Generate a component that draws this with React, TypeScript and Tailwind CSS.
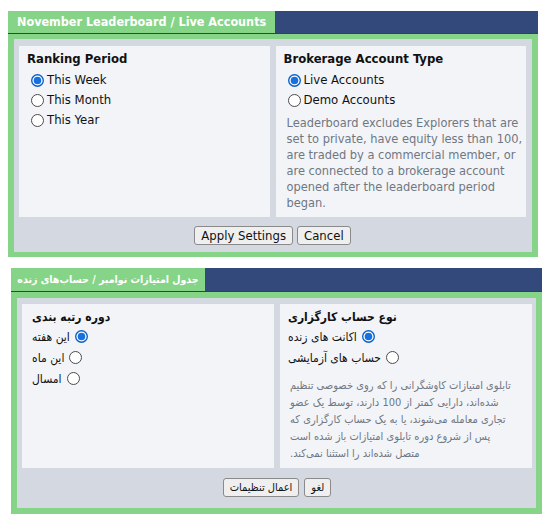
import React from 'react';

const Radio: React.FC<{ checked?: boolean; className?: string }> = ({ checked, className }) =>
  checked ? (
    <svg width="13" height="13" viewBox="0 0 13 13" className={`shrink-0 ${className ?? ''}`}>
      <circle cx="6.5" cy="6.5" r="6.5" fill="#0a5fc6" />
      <circle cx="6.5" cy="6.5" r="5.1" fill="#ffffff" />
      <circle cx="6.5" cy="6.5" r="3.8" fill="#1670df" />
    </svg>
  ) : (
    <svg width="13" height="13" viewBox="0 0 13 13" className={`shrink-0 ${className ?? ''}`}>
      <circle cx="6.5" cy="6.5" r="6" fill="#ffffff" stroke="#4b4b4b" strokeWidth="1" />
    </svg>
  );

const Button: React.FC<{ children: React.ReactNode; className?: string }> = ({ children, className }) => (
  <button
    className={`h-[19px] bg-[#efefef] border border-[#8a8a8a] rounded-[3px] text-[#111] leading-none flex items-center justify-center ${className ?? ''}`}
  >
    {children}
  </button>
);

const EnRow: React.FC<{ label: string; checked?: boolean }> = ({ label, checked }) => (
  <div className="h-[20px] flex items-center">
    <Radio checked={checked} className="ml-[4px] mr-[3px]" />
    <span>{label}</span>
  </div>
);

const FaRow: React.FC<{ label: string; checked?: boolean }> = ({ label, checked }) => (
  <div className="h-[21px] flex items-center">
    <span dir="rtl">{label}</span>
    <Radio checked={checked} className="ml-[5px]" />
  </div>
);

export default function App() {
  return (
    <div className="bg-white min-h-[526px] pt-[11px] text-[13px] text-[#111] font-['DejaVu_Sans_Condensed','DejaVu_Sans',sans-serif]">
      {/* English widget */}
      <div className="ml-[8px] w-[530px]">
        <div className="flex h-[23px] bg-[#33497b] border-b border-[#27465c]">
          <div className="w-[267px] bg-[#86d487] text-white font-bold text-[12.5px] leading-[22px] pl-[9px] whitespace-nowrap">
            November Leaderboard / Live Accounts
          </div>
        </div>
        <div className="bg-[#86d487] px-[6px] pt-[5px] pb-[5px]">
          <div className="bg-[#d4d8e0] pt-[7px] pb-[7px] pl-[5px] pr-[6px]">
            <div className="grid grid-cols-2 gap-[6px] h-[171px]">
              <div className="bg-[#f3f4f8] pl-[8px] pt-[5px]">
                <div className="font-bold leading-[16px]">Ranking Period</div>
                <div className="mt-[3px]">
                  <EnRow label="This Week" checked />
                  <EnRow label="This Month" />
                  <EnRow label="This Year" />
                </div>
              </div>
              <div className="bg-[#f3f4f8] pl-[8px] pr-[4px] pt-[5px]">
                <div className="font-bold leading-[16px]">Brokerage Account Type</div>
                <div className="mt-[3px]">
                  <EnRow label="Live Accounts" checked />
                  <EnRow label="Demo Accounts" />
                </div>
                <p className="mt-[5px] ml-[3px] text-[12.7px] leading-[16px] text-[#6f7782] whitespace-nowrap">
                  Leaderboard excludes Explorers that are
                  <br />
                  set to private, have equity less than 100,
                  <br />
                  are traded by a commercial member, or
                  <br />
                  are connected to a brokerage account
                  <br />
                  opened after the leaderboard period
                  <br />
                  began.
                </p>
              </div>
            </div>
            <div className="flex justify-center gap-[4px] mt-[9px]">
              <Button className="px-[6px]">Apply Settings</Button>
              <Button className="px-[6px]">Cancel</Button>
            </div>
          </div>
        </div>
      </div>

      {/* Persian widget */}
      <div className="ml-[11px] w-[531px] mt-[11px] text-[12px]">
        <div className="flex h-[24px] bg-[#33497b] border-b border-[#27465c]">
          <div dir="rtl" className="w-[194px] bg-[#86d487] text-white font-bold text-[10.5px] leading-[23px] text-center whitespace-nowrap">
            جدول امتیازات نوامبر / حساب‌های زنده
          </div>
        </div>
        <div className="bg-[#86d487] px-[6px] pt-[6px] pb-[6px]">
          <div className="bg-[#d4d8e0] pt-[6px] pb-[11px] pl-[5px] pr-[4px]">
            <div className="grid grid-cols-2 gap-[6px] h-[164px]">
              <div className="bg-[#f3f4f8] pl-[10px] pt-[4px]">
                <div dir="rtl" className="text-left font-bold leading-[18px]">دوره رتبه بندی</div>
                <div>
                  <FaRow label="این هفته" checked />
                  <FaRow label="این ماه" />
                  <FaRow label="امسال" />
                </div>
              </div>
              <div className="bg-[#f3f4f8] pl-[8px] pt-[4px]">
                <div dir="rtl" className="text-left font-bold leading-[18px]">نوع حساب کارگزاری</div>
                <div>
                  <FaRow label="اکانت های زنده" checked />
                  <FaRow label="حساب های آزمایشی" />
                </div>
                <p dir="rtl" className="mt-[9px] ml-[2px] text-left text-[11px] leading-[17px] text-[#6f7782] whitespace-nowrap">
                  تابلوی امتیازات کاوشگرانی را که روی خصوصی تنظیم
                  <br />
                  شده‌اند، دارایی کمتر از 100 دارند، توسط یک عضو
                  <br />
                  تجاری معامله می‌شوند، یا به یک حساب کارگزاری که
                  <br />
                  پس از شروع دوره تابلوی امتیازات باز شده است
                  <br />
                  متصل شده‌اند را استثنا نمی‌کند.
                </p>
              </div>
            </div>
            <div className="flex justify-center gap-[5px] mt-[10px]">
              <Button className="px-[6px] text-[11px]">
                <span dir="rtl">اعمال تنظیمات</span>
              </Button>
              <Button className="px-[6px] text-[11px]">
                <span dir="rtl">لغو</span>
              </Button>
            </div>
          </div>
        </div>
      </div>
    </div>
  );
}
